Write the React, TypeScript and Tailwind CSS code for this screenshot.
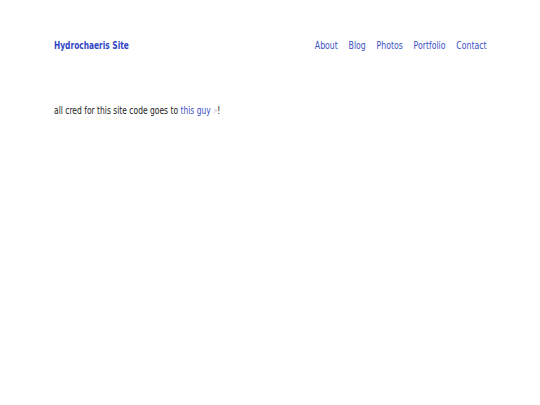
import React from "react";

export default function App() {
  return (
    <div className="min-h-[405px] bg-white" style={{ fontFamily: '"DejaVu Sans", sans-serif' }}>
      <div className="mx-[54px] pt-[38px]">
        <header className="flex items-center justify-between text-[10px] leading-[16px]">
          <a className="inline-block origin-left [transform:scaleX(0.746)] font-bold text-[#2f45c5]">Hydrochaeris Site</a>
          <nav className="flex origin-right [transform:scaleX(0.775)] gap-[14px] text-[#3b4fc4]">
            <a>About</a>
            <a>Blog</a>
            <a>Photos</a>
            <a>Portfolio</a>
            <a>Contact</a>
          </nav>
        </header>
        <main className="mt-[49px] text-[10px] leading-[16px] text-[#222]">
          <p className="inline-block origin-left [transform:scaleX(0.757)]">
            all cred for this site code goes to <a className="text-[#3b4fc4]">this guy<span className="ml-[2px] text-[8px] text-[#c8c8e0]">↗</span></a>!
          </p>
        </main>
      </div>
    </div>
  );
}
